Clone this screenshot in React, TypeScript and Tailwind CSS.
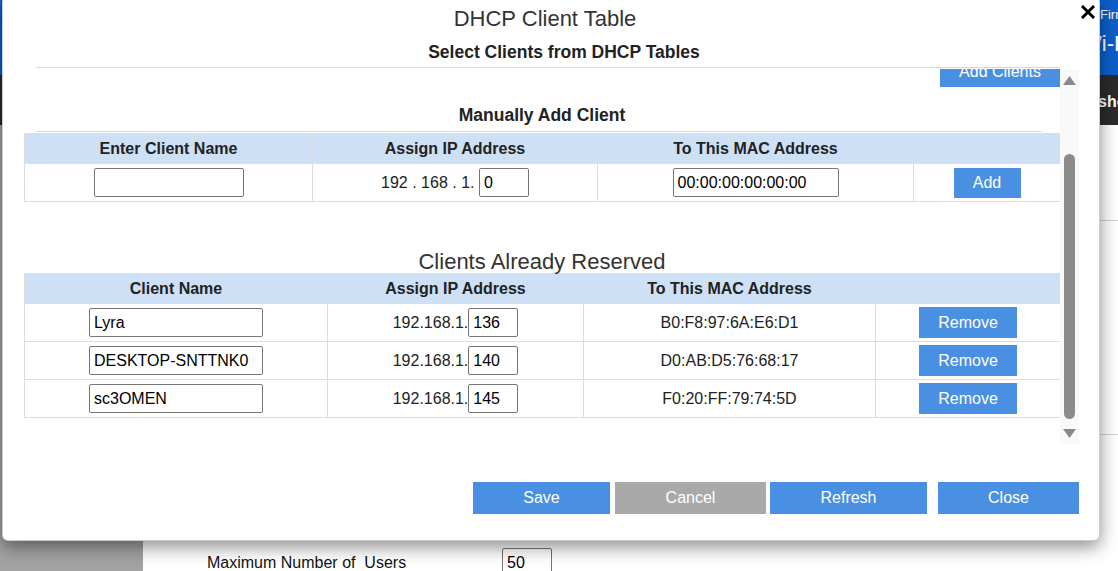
import React from 'react'

const reserved = [
  { name: 'Lyra', ip: '136', mac: 'B0:F8:97:6A:E6:D1' },
  { name: 'DESKTOP-SNTTNK0', ip: '140', mac: 'D0:AB:D5:76:68:17' },
  { name: 'sc3OMEN', ip: '145', mac: 'F0:20:FF:79:74:5D' },
]

function TextBox({ value, className }: { value: string; className: string }) {
  return (
    <input
      readOnly
      value={value}
      className={`h-[29px] border border-[#767676] rounded-[2px] bg-white px-[4px] text-[16px] text-black outline-none align-middle ${className}`}
    />
  )
}

function ScrollBar() {
  return (
    <div className="w-[19px] h-[375px] bg-[#f9f9f9] flex flex-col items-center">
      <svg width="13" height="9" viewBox="0 0 13 9" className="mt-[7px]">
        <polygon points="6.5,0 13,9 0,9" fill="#8a8a8a" />
      </svg>
      <div className="mt-[69px] w-[11px] h-[265px] rounded-full bg-[#8b8b8b]" />
      <svg width="13" height="9" viewBox="0 0 13 9" className="mt-[10px]">
        <polygon points="0,0 13,0 6.5,9" fill="#8a8a8a" />
      </svg>
    </div>
  )
}

export default function App() {
  return (
    <div className="relative w-[1118px] h-[571px] overflow-hidden bg-white font-['Liberation_Sans',Arial,sans-serif] text-[#222]">
      {/* page behind the dialog */}
      <div className="flex flex-col h-full">
        <div className="shrink-0 h-[75px] bg-[#0b5fca] text-white whitespace-nowrap pt-[7px]">
          <div className="pl-[1100px] text-[13px] leading-[16px]">Firmware</div>
          <div className="pl-[1081px] mt-[8px] text-[22px] leading-[26px]">Wi-Fi</div>
        </div>
        <div className="shrink-0 h-[50px] bg-[#2b2b2b] text-white whitespace-nowrap pl-[1098px] pt-[15px] text-[16px] font-bold">
          show
        </div>
        <div className="flex flex-1 min-h-0">
          <div className="w-[143px] bg-[#a3a3a3]" />
          <div className="flex-1 flex flex-col">
            <div className="mt-[95px] border-t border-[#c9d1d9]" />
            <div className="mt-[213px] border-t border-[#c9d1d9]" />
            <div className="mt-[113px] flex items-center">
              <span className="ml-[64px] w-[295px] text-[16px] leading-[20px] text-[#111]">
                Maximum Number of&nbsp; Users
              </span>
              <input
                readOnly
                value="50"
                className="w-[50px] h-[29px] border border-[#767676] rounded-[2px] px-[4px] text-[16px] text-black outline-none"
              />
            </div>
          </div>
        </div>
      </div>

      {/* dialog */}
      <div className="absolute left-[2px] top-[-4px] w-[1098px] rounded-[6px] bg-white border border-black/20 shadow-[0_6px_18px_rgba(0,0,0,0.45)] pb-[26px]">
        <button className="absolute right-[4px] top-[8px] p-0">
          <svg width="14" height="14" viewBox="0 0 14 14">
            <path d="M2 2 L12 12 M12 2 L2 12" stroke="#000" strokeWidth="3" strokeLinecap="square" />
          </svg>
        </button>

        <h2 className="pt-[9px] pr-[12px] text-center text-[22px] leading-[26px] text-[#333]">DHCP Client Table</h2>
        <h3 className="mt-[10px] pl-[26px] text-center text-[17.5px] leading-[20px] font-bold text-[#222]">
          Select Clients from DHCP Tables
        </h3>
        <div className="mt-[5px] ml-[33px] w-[1024px] border-t border-[#d3d9df]" />

        <div className="flex mt-[1px]">
          <div className="ml-[21px] w-[1036px] h-[375px] overflow-hidden">
            <div className="-mt-[12px]">
              <div className="flex justify-end">
                <button className="w-[120px] h-[30px] bg-[#4a90e2] text-white text-[16px]">Add Clients</button>
              </div>

              <div className="mt-[18px] text-center text-[17.5px] leading-[20px] font-bold text-[#222]">
                Manually Add Client
              </div>
              <div className="mt-[6px] ml-[12px] w-[1006px] border-t border-[#d3d9df]" />

              <table className="mt-[1px] w-[1036px] table-fixed border-collapse text-[16px]">
                <colgroup>
                  <col className="w-[288px]" />
                  <col className="w-[285px]" />
                  <col className="w-[316px]" />
                  <col className="w-[147px]" />
                </colgroup>
                <thead>
                  <tr className="bg-[#cde0f5] h-[30px]">
                    <th className="border border-[#dcdcdc] font-bold">Enter Client Name</th>
                    <th className="border border-[#dcdcdc] font-bold">Assign IP Address</th>
                    <th className="border border-[#dcdcdc] font-bold">To This MAC Address</th>
                    <th className="border border-[#dcdcdc]" />
                  </tr>
                </thead>
                <tbody>
                  <tr className="h-[38px]">
                    <td className="border border-[#dcdcdc] text-center">
                      <TextBox value="" className="w-[150px]" />
                    </td>
                    <td className="border border-[#dcdcdc] text-center whitespace-nowrap">
                      <span className="align-middle">192 . 168 . 1.&nbsp;</span>
                      <TextBox value="0" className="w-[50px]" />
                    </td>
                    <td className="border border-[#dcdcdc] text-center">
                      <TextBox value="00:00:00:00:00:00" className="w-[166px]" />
                    </td>
                    <td className="border border-[#dcdcdc] text-center">
                      <button className="w-[67px] h-[30px] bg-[#4a90e2] text-white text-[16px] align-middle">Add</button>
                    </td>
                  </tr>
                </tbody>
              </table>

              <div className="mt-[49px] text-center text-[22px] leading-[22px] text-[#333]">Clients Already Reserved</div>

              <table className="w-[1036px] table-fixed border-collapse text-[16px]">
                <colgroup>
                  <col className="w-[303px]" />
                  <col className="w-[256px]" />
                  <col className="w-[292px]" />
                  <col className="w-[185px]" />
                </colgroup>
                <thead>
                  <tr className="bg-[#cde0f5] h-[30px]">
                    <th className="border border-[#dcdcdc] font-bold">Client Name</th>
                    <th className="border border-[#dcdcdc] font-bold">Assign IP Address</th>
                    <th className="border border-[#dcdcdc] font-bold">To This MAC Address</th>
                    <th className="border border-[#dcdcdc]" />
                  </tr>
                </thead>
                <tbody>
                  {reserved.map((c) => (
                    <tr key={c.mac} className="h-[38px]">
                      <td className="border border-[#dcdcdc] text-center">
                        <TextBox value={c.name} className="w-[174px]" />
                      </td>
                      <td className="border border-[#dcdcdc] text-center whitespace-nowrap">
                        <span className="align-middle">192.168.1.</span>
                        <TextBox value={c.ip} className="w-[50px]" />
                      </td>
                      <td className="border border-[#dcdcdc] text-center">{c.mac}</td>
                      <td className="border border-[#dcdcdc] text-center">
                        <button className="w-[98px] h-[31px] bg-[#4a90e2] text-white text-[16px] align-middle">Remove</button>
                      </td>
                    </tr>
                  ))}
                </tbody>
              </table>
            </div>
          </div>
          <ScrollBar />
        </div>

        <div className="mt-[38px] flex justify-end pr-[20px]">
          <button className="w-[137px] h-[32px] bg-[#4a90e2] text-white text-[16px]">Save</button>
          <button className="ml-[5px] w-[151px] h-[32px] bg-[#a9a9a9] text-white text-[16px]">Cancel</button>
          <button className="ml-[4px] w-[157px] h-[32px] bg-[#4a90e2] text-white text-[16px]">Refresh</button>
          <button className="ml-[11px] w-[141px] h-[32px] bg-[#4a90e2] text-white text-[16px]">Close</button>
        </div>
      </div>
    </div>
  )
}
